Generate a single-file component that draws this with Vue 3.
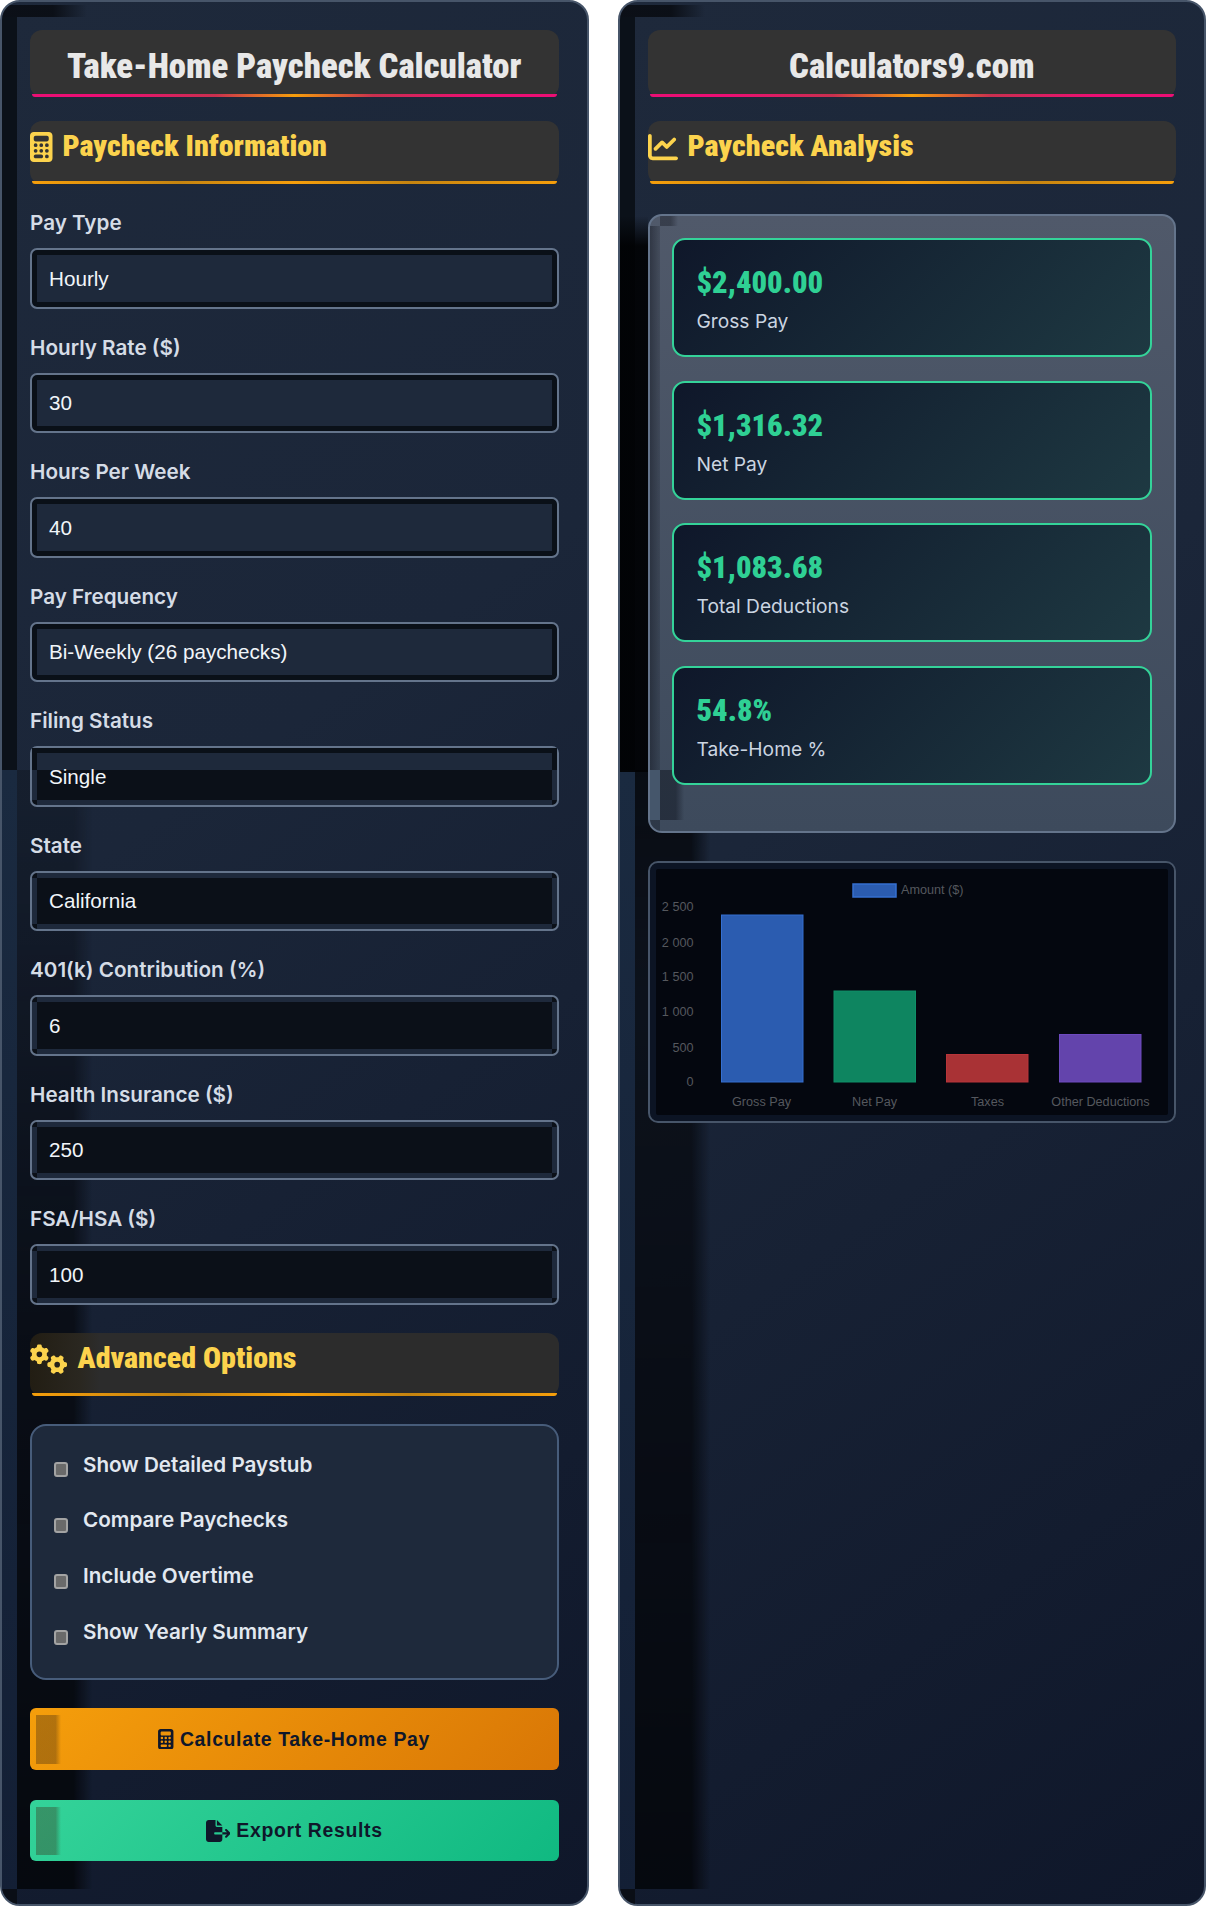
<script setup>
const fields = [
  { label: 'Pay Type', value: 'Hourly', state: 'high' },
  { label: 'Hourly Rate ($)', value: '30', state: 'high' },
  { label: 'Hours Per Week', value: '40', state: 'high' },
  { label: 'Pay Frequency', value: 'Bi-Weekly (26 paychecks)', state: 'high' },
  { label: 'Filing Status', value: 'Single', state: 'split' },
  { label: 'State', value: 'California', state: 'low' },
  { label: '401(k) Contribution (%)', value: '6', state: 'low' },
  { label: 'Health Insurance ($)', value: '250', state: 'low' },
  { label: 'FSA/HSA ($)', value: '100', state: 'low' },
]
const options = ['Show Detailed Paystub', 'Compare Paychecks', 'Include Overtime', 'Show Yearly Summary']
const results = [
  { value: '$2,400.00', label: 'Gross Pay' },
  { value: '$1,316.32', label: 'Net Pay' },
  { value: '$1,083.68', label: 'Total Deductions' },
  { value: '54.8%', label: 'Take-Home %' },
]
const ticks = [
  { t: '2 500', y: 49 },
  { t: '2 000', y: 84.5 },
  { t: '1 500', y: 119 },
  { t: '1 000', y: 154 },
  { t: '500', y: 189.5 },
  { t: '0', y: 224 },
]
const bars = [
  { label: 'Gross Pay', x: 73.5, y: 53, fill: '#2b5cb0', stroke: '#356fd0', cx: 113.5 },
  { label: 'Net Pay', x: 186, y: 129, fill: '#0e8560', stroke: '#0f9068', cx: 226.5 },
  { label: 'Taxes', x: 298.5, y: 192.5, fill: '#a93235', stroke: '#b8353a', cx: 339.5 },
  { label: 'Other Deductions', x: 411.5, y: 172.5, fill: '#6344ac', stroke: '#6e4abf', cx: 452.5 },
]
const calc = 'M64 0C28.7 0 0 28.7 0 64V448c0 35.3 28.7 64 64 64H320c35.3 0 64-28.7 64-64V64c0-35.3-28.7-64-64-64H64zM96 64H288c17.7 0 32 14.3 32 32v32c0 17.7-14.3 32-32 32H96c-17.7 0-32-14.3-32-32V96c0-17.7 14.3-32 32-32zm32 160a32 32 0 1 1 -64 0 32 32 0 1 1 64 0zM96 352a32 32 0 1 1 0-64 32 32 0 1 1 0 64zM64 416c0-17.7 14.3-32 32-32h96c17.7 0 32 14.3 32 32s-14.3 32-32 32H96c-17.7 0-32-14.3-32-32zM192 256a32 32 0 1 1 0-64 32 32 0 1 1 0 64zm32 64a32 32 0 1 1 -64 0 32 32 0 1 1 64 0zm64-64a32 32 0 1 1 0-64 32 32 0 1 1 0 64zm32 64a32 32 0 1 1 -64 0 32 32 0 1 1 64 0zM288 448a32 32 0 1 1 0-64 32 32 0 1 1 0 64z'
const chartLine = 'M64 64c0-17.7-14.3-32-32-32S0 46.3 0 64V400c0 44.2 35.8 80 80 80H480c17.7 0 32-14.3 32-32s-14.3-32-32-32H80c-8.8 0-16-7.2-16-16V64zm406.6 86.6c12.5-12.5 12.5-32.8 0-45.3s-32.8-12.5-45.3 0L320 210.7l-57.4-57.4c-12.5-12.5-32.8-12.5-45.3 0l-112 112c-12.5 12.5-12.5 32.8 0 45.3s32.8 12.5 45.3 0L240 221.3l57.4 57.4c12.5 12.5 32.8 12.5 45.3 0l128-128z'
const fileExport = 'M0 64C0 28.7 28.7 0 64 0H224V128c0 17.7 14.3 32 32 32H384V288H216c-13.3 0-24 10.7-24 24s10.7 24 24 24H384V448c0 35.3-28.7 64-64 64H64c-35.3 0-64-28.7-64-64V64zM384 336V288H494.1l-39-39c-9.4-9.4-9.4-24.6 0-33.9s24.6-9.4 33.9 0l80 80c9.4 9.4 9.4 24.6 0 33.9l-80 80c-9.4 9.4-24.6 9.4-33.9 0s-9.4-24.6 0-33.9l39-39H384zm0-208H256V0L384 128z'
const gears = 'M308.5 135.3c7.1-6.3 9.9-16.2 6.2-25c-2.3-5.3-4.8-10.5-7.6-15.5L304 89.4c-3-5-6.3-9.9-9.8-14.6c-5.7-7.6-15.7-10.1-24.7-7.1l-28.2 9.3c-10.7-8.8-23-16-36.2-20.9L199 27.1c-1.9-9.3-9.1-16.7-18.5-17.8C173.9 8.4 167.2 8 160.4 8h-.7c-6.8 0-13.5 .4-20.1 1.2c-9.4 1.1-16.6 8.6-18.5 17.8L115 56.1c-13.3 5-25.5 12.1-36.2 20.9L50.5 67.8c-9-3-19-.5-24.7 7.1c-3.5 4.7-6.8 9.6-9.9 14.6l-3 5.3c-2.8 5-5.3 10.2-7.6 15.6c-3.7 8.7-.9 18.6 6.2 25l22.2 19.8C32.6 161.9 32 168.9 32 176s.6 14.1 1.7 20.9L11.5 216.7c-7.1 6.3-9.9 16.2-6.2 25c2.3 5.3 4.8 10.5 7.6 15.6l3 5.2c3 5.1 6.3 9.9 9.9 14.6c5.7 7.6 15.7 10.1 24.7 7.1l28.2-9.3c10.7 8.8 23 16 36.2 20.9l6.1 29.1c1.9 9.3 9.1 16.7 18.5 17.8c6.7 .8 13.5 1.2 20.4 1.2s13.7-.4 20.4-1.2c9.4-1.1 16.6-8.6 18.5-17.8l6.1-29.1c13.3-5 25.5-12.1 36.2-20.9l28.2 9.3c9 3 19 .5 24.7-7.1c3.5-4.7 6.8-9.5 9.8-14.6l3.1-5.4c2.8-5 5.3-10.2 7.6-15.5c3.7-8.7 .9-18.6-6.2-25l-22.2-19.8c1.1-6.8 1.7-13.8 1.7-20.9s-.6-14.1-1.7-20.9l22.2-19.8zM112 176a48 48 0 1 1 96 0 48 48 0 1 1 -96 0zM504.7 500.5c6.3 7.1 16.2 9.9 25 6.2c5.3-2.3 10.5-4.8 15.5-7.6l5.4-3.1c5-3 9.9-6.3 14.6-9.8c7.6-5.7 10.1-15.7 7.1-24.7l-9.3-28.2c8.8-10.7 16-23 20.9-36.2l29.1-6.1c9.3-1.9 16.7-9.1 17.8-18.5c.8-6.7 1.2-13.5 1.2-20.4s-.4-13.7-1.2-20.4c-1.1-9.4-8.6-16.6-17.8-18.5L583.9 307c-5-13.3-12.1-25.5-20.9-36.2l9.3-28.2c3-9 .5-19-7.1-24.7c-4.7-3.5-9.6-6.8-14.6-9.9l-5.3-3c-5-2.8-10.2-5.3-15.6-7.6c-8.7-3.7-18.6-.9-25 6.2l-19.8 22.2c-6.8-1.1-13.8-1.7-20.9-1.7s-14.1 .6-20.9 1.7l-19.8-22.2c-6.3-7.1-16.2-9.9-25-6.2c-5.3 2.3-10.5 4.8-15.6 7.6l-5.2 3c-5.1 3-9.9 6.3-14.6 9.9c-7.6 5.7-10.1 15.7-7.1 24.7l9.3 28.2c-8.8 10.7-16 23-20.9 36.2L315.1 313c-9.3 1.9-16.7 9.1-17.8 18.5c-.8 6.7-1.2 13.5-1.2 20.4s.4 13.7 1.2 20.4c1.1 9.4 8.6 16.6 17.8 18.5l29.1 6.1c5 13.3 12.1 25.5 20.9 36.2l-9.3 28.2c-3 9-.5 19 7.1 24.7c4.7 3.5 9.5 6.8 14.6 9.8l5.4 3.1c5 2.8 10.2 5.3 15.5 7.6c8.7 3.7 18.6 .9 25-6.2l19.8-22.2c6.8 1.1 13.8 1.7 20.9 1.7s14.1-.6 20.9-1.7l19.8 22.2zM464 304a48 48 0 1 1 0 96 48 48 0 1 1 0-96z'
</script>

<template>
  <div class="page">
    <section class="panel">
      <h1 class="title">Take-Home Paycheck Calculator</h1>
      <h2 class="heading">
        <svg class="ic" viewBox="0 0 384 512" width="22.5" height="30"><path :d="calc" /></svg>
        <span>Paycheck Information</span>
      </h2>
      <div class="fields">
        <div v-for="f in fields" :key="f.label" class="field">
          <div class="label">{{ f.label }}</div>
          <div class="input" :class="f.state"><span>{{ f.value }}</span></div>
        </div>
      </div>
      <h2 class="heading adv">
        <svg class="ic" viewBox="0 0 640 512" width="37.5" height="30"><path :d="gears" /></svg>
        <span>Advanced Options</span>
      </h2>
      <div class="options">
        <div v-for="o in options" :key="o" class="option">
          <i class="check"></i>
          <span>{{ o }}</span>
        </div>
      </div>
      <button class="btn orange">
        <svg viewBox="0 0 384 512" width="15.5" height="20.5"><path :d="calc" /></svg>
        <span>Calculate Take-Home Pay</span>
      </button>
      <button class="btn green">
        <svg viewBox="0 0 576 512" width="24.5" height="22"><path :d="fileExport" /></svg>
        <span>Export Results</span>
      </button>
    </section>

    <section class="panel right">
      <h1 class="title">Calculators9.com</h1>
      <h2 class="heading">
        <svg class="ic" viewBox="0 0 512 512" width="30" height="30"><path :d="chartLine" /></svg>
        <span>Paycheck Analysis</span>
      </h2>
      <div class="results">
        <div v-for="r in results" :key="r.label" class="card">
          <div class="value">{{ r.value }}</div>
          <div class="rlabel">{{ r.label }}</div>
        </div>
      </div>
      <div class="chart">
        <svg viewBox="0 0 528 261" width="528" height="261">
          <rect x="205" y="22" width="43" height="13" fill="#2b5cb0" stroke="#356fd0" stroke-width="1.5" />
          <text x="253" y="31.5" class="ct">Amount ($)</text>
          <text v-for="t in ticks" :key="t.t" :x="45.5" :y="t.y" text-anchor="end" class="ct">{{ t.t }}</text>
          <g v-for="b in bars" :key="b.label">
            <rect :x="b.x" :y="b.y" width="81.5" :height="220 - b.y" :fill="b.fill" :stroke="b.stroke" stroke-width="1" />
            <text :x="b.cx" y="243.5" text-anchor="middle" class="ct">{{ b.label }}</text>
          </g>
        </svg>
      </div>
    </section>
  </div>
</template>

<style scoped>
.page {
  width: 1206px;
  height: 1906px;
  display: flex;
  gap: 29px;
  background: #fff;
  font-family: Inter, "Liberation Sans", sans-serif;
}
.panel {
  position: relative;
  width: 588.5px;
  height: 1906px;
  box-sizing: border-box;
  padding: 28px;
  border: 2px solid #475569;
  border-radius: 20px;
  overflow: hidden;
  background: linear-gradient(145deg, #1e293b 0%, #1b2639 40%, #0f172a 100%);
}
/* tile seam of the inset shadow: dark edge above, lighter edge and dark band below */
.panel::before {
  content: "";
  position: absolute;
  left: 0;
  top: 0;
  width: 100px;
  height: 768px;
  background:
    linear-gradient(#0b1119, #0b1119) 0 15px / 15px 100% no-repeat,
    linear-gradient(90deg, rgba(8, 11, 17, .85) 60%, rgba(8, 11, 17, 0)) 0 3px / 85px 12px no-repeat;
}
.panel::after {
  content: "";
  position: absolute;
  left: 0;
  top: 768px;
  bottom: 0;
  width: 100px;
  background:
    linear-gradient(#0a0e16, #0a0e16),
    linear-gradient(#1a2a40, #131f35),
    linear-gradient(90deg, rgba(4, 6, 10, 1) 75%, rgba(4, 6, 10, 0));
  background-size: 15px 15px, 15px 100%, 75px calc(100% - 15px);
  background-position: 0 100%, 0 0, 15px 0;
  background-repeat: no-repeat;
  -webkit-mask: linear-gradient(90deg, #000 15px, transparent 15px), linear-gradient(rgba(0, 0, 0, .25) 3%, rgba(0, 0, 0, .7) 50%, rgba(0, 0, 0, .85) 100%);
  mask: linear-gradient(90deg, #000 15px, transparent 15px), linear-gradient(rgba(0, 0, 0, .25) 3%, rgba(0, 0, 0, .7) 50%, rgba(0, 0, 0, .85) 100%);
}
.right::after {
  -webkit-mask: linear-gradient(90deg, #000 15px, transparent 15px), linear-gradient(rgba(0, 0, 0, .8), rgba(0, 0, 0, .6) 20%, rgba(0, 0, 0, .85) 100%);
  mask: linear-gradient(90deg, #000 15px, transparent 15px), linear-gradient(rgba(0, 0, 0, .8), rgba(0, 0, 0, .6) 20%, rgba(0, 0, 0, .85) 100%);
}
.panel > * {
  position: relative;
  z-index: 1;
}
.title, .heading {
  margin: 0;
  font-family: Roboto, sans-serif;
  font-stretch: 75%;
  font-weight: 900;
}
.title {
  height: 67px;
  line-height: 72px;
  text-align: center;
  color: #e8e8e8;
  font-size: 34.7px;
  background: #333;
  border-radius: 12px;
}
.title::after, .heading::after {
  content: "";
  position: absolute;
  left: 2px;
  right: 2px;
  bottom: 0;
  height: 3px;
  border-radius: 0 0 8px 8px;
}
.title::after {
  background: linear-gradient(90deg, #ec0f74 0%, #ec0f74 15%, #c9304f 35%, #f59e0b 50%, #c9304f 65%, #ec0f74 85%, #ec0f74 100%);
}
.heading {
  margin-top: 24px;
  height: 63px;
  display: flex;
  align-items: flex-start;
  gap: 10px;
  color: #fcd34d;
  font-size: 30px;
  line-height: 50px;
  background: #333;
  border-radius: 12px;
}
.heading::after {
  background: linear-gradient(90deg, #f59e0b 0%, #c58410 28%, #f59e0b 50%, #c58410 72%, #f59e0b 100%);
}
.ic {
  fill: #fcd34d;
  margin-top: 11px;
  flex: none;
}
.adv {
  margin-top: 3.6px;
  background: linear-gradient(90deg, #221d13 0, #2a2720 50px, #2c2c2c 70px);
}
.fields {
  margin-top: 25px;
}
.field {
  height: 124.5px;
}
.label {
  height: 28px;
  line-height: 28px;
  margin-bottom: 11px;
  font-size: 20.67px;
  font-weight: 600;
  color: #d5dce6;
}
.input {
  position: relative;
  box-sizing: border-box;
  height: 60.6px;
  padding-left: 17px;
  padding-top: 1px;
  display: flex;
  align-items: center;
  border: 2px solid #64748b;
  border-radius: 7px;
  font-family: "Liberation Sans", Arial, sans-serif;
  font-size: 20.67px;
  color: #f1f5f9;
}
.input span {
  position: relative;
  z-index: 1;
}
.input.high {
  background: #1e293b;
  box-shadow: inset 0 0 0 5px #0a1018;
}
.input.low, .input.split {
  background-color: #1e293b;
  background-image:
    linear-gradient(#0b1018, #0b1018),
    linear-gradient(#0b1018, #0b1018),
    linear-gradient(#0b1018, #0b1018),
    linear-gradient(#0b1018, #0b1018),
    linear-gradient(#0b1018, #0b1018);
  background-size: calc(100% - 10px) calc(100% - 10px), 5px 5px, 5px 5px, 5px 5px, 5px 5px;
  background-position: center, 0 0, 100% 0, 0 100%, 100% 100%;
  background-repeat: no-repeat;
}
.input.split::before {
  content: "";
  position: absolute;
  left: 0;
  right: 0;
  top: 0;
  height: 22px;
  background: #1e293b;
  box-shadow: inset 5px 5px 0 #0a1018, inset -5px 0 0 #0a1018;
}
.options {
  margin-top: 28px;
  box-sizing: border-box;
  height: 256px;
  padding: 10px 0 0 22px;
  border: 2px solid #475c7a;
  border-radius: 16px;
  background: #1e293b;
}
.option {
  height: 55.9px;
  display: flex;
  align-items: center;
  gap: 15px;
  font-size: 20.67px;
  font-weight: 600;
  color: #e2e8f0;
}
.check {
  box-sizing: border-box;
  width: 14px;
  height: 15px;
  margin-top: 11px;
  border: 2.5px solid #a3a3a3;
  border-radius: 3px;
  background: #6a6a6a;
}
.btn {
  display: flex;
  width: 100%;
  align-items: center;
  justify-content: center;
  gap: 6px;
  overflow: hidden;
  border: 0;
  border-radius: 6px;
  font-family: "Liberation Sans", Arial, sans-serif;
  font-weight: 700;
  font-size: 19.45px;
  letter-spacing: .65px;
  color: #0f172a;
}
.btn svg {
  fill: #0f172a;
  flex: none;
}
.btn::before {
  content: "";
  position: absolute;
  left: 6px;
  top: 7px;
  bottom: 6px;
  width: 25px;
  background: linear-gradient(90deg, rgba(60, 40, 20, .36) 78%, rgba(60, 40, 20, 0));
}
.orange {
  height: 62px;
  margin-top: 28px;
  background: linear-gradient(135deg, #f59e0b, #d97706);
}
.green {
  height: 61px;
  margin-top: 30px;
  background: linear-gradient(135deg, #34d399, #10b981);
}
.results {
  margin-top: 30px;
  box-sizing: border-box;
  height: 619px;
  padding: 22px 22px 0;
  border: 2px solid #64748b;
  border-radius: 14px;
  background: linear-gradient(#50596a, #3d4a5c);
}
/* seam inside the box: soft dark edge above the tile line, dark band right of it below */
.results::before {
  content: "";
  position: absolute;
  left: 0;
  top: 0;
  bottom: 0;
  width: 36px;
  border-radius: 12px 0 0 12px;
  background:
    linear-gradient(90deg, rgba(20, 24, 34, .5), rgba(20, 24, 34, .18)) 0 10px / 10px 544px no-repeat,
    linear-gradient(90deg, rgba(20, 24, 34, .4) 60%, rgba(20, 24, 34, 0)) 10px 0 / 18px 10px no-repeat,
    linear-gradient(#45566b, #45566b) 0 554px / 10px 50px no-repeat,
    linear-gradient(90deg, rgba(24, 30, 42, .6) 65%, rgba(24, 30, 42, 0)) 10px 554px / 24px 50px no-repeat,
    linear-gradient(rgba(24, 30, 42, .4), rgba(24, 30, 42, .4)) 0 604px / 10px 20px no-repeat;
}
/* shadow the box throws to its left, cut at the tile line */
.results::after {
  content: "";
  position: absolute;
  z-index: -1;
  left: -32px;
  top: 0;
  width: 30px;
  height: 556px;
  background: linear-gradient(rgba(1, 2, 4, 0), rgba(1, 2, 4, .92) 30px);
}
.card {
  position: relative;
  box-sizing: border-box;
  height: 119px;
  margin-bottom: 23.6px;
  padding: 21px 0 0 23px;
  border: 2px solid #34d399;
  border-radius: 13px;
  background: linear-gradient(135deg, #0f172a, #1e3942);
}
.value {
  font-family: Roboto, sans-serif;
  font-stretch: 75%;
  font-weight: 900;
  font-size: 30.5px;
  letter-spacing: 0;
  line-height: 44px;
  color: #2fd094;
}
.rlabel {
  margin-top: 3px;
  font-size: 19.2px;
  line-height: 26px;
  color: #cbd5e1;
}
.chart {
  margin-top: 28px;
  height: 262px;
  box-sizing: border-box;
  border: 2px solid #475569;
  border-radius: 10px;
  overflow: hidden;
  background: #04070f;
  box-shadow: inset 0 0 0 6px #0c1424;
}
.chart svg {
  display: block;
  margin: -1px -2px;
}
.ct {
  font-family: "Liberation Sans", Arial, sans-serif;
  font-size: 12.65px;
  fill: #55585e;
}
</style>
